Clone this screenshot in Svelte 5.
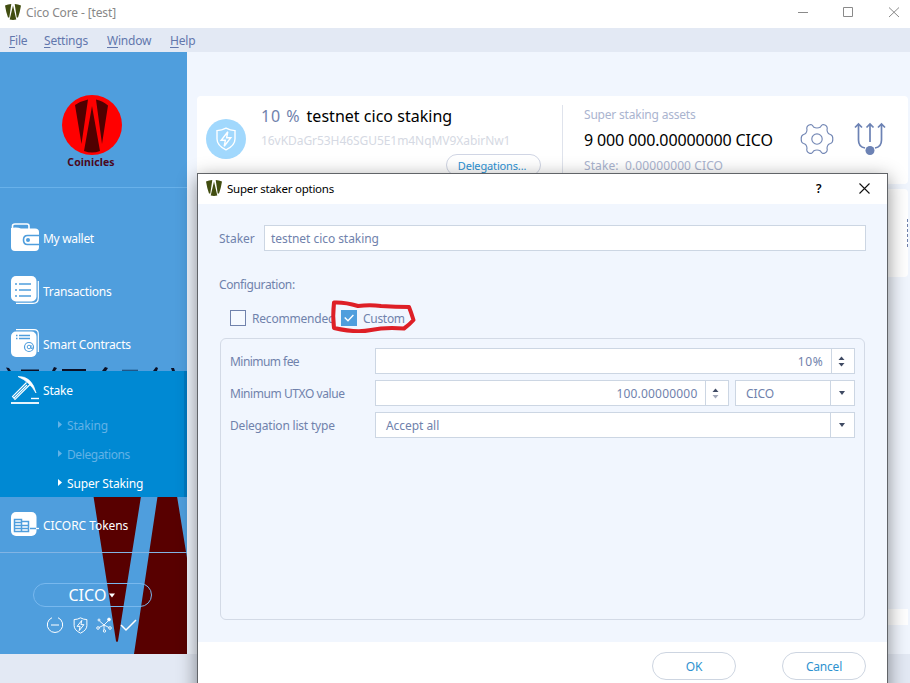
<script>
  const menus = [
    { key: 'F', rest: 'ile', w: 35 },
    { key: 'S', rest: 'ettings', w: 63 },
    { key: 'W', rest: 'indow', w: 63 },
    { key: 'H', rest: 'elp', w: 40 }
  ];
  const subs = [
    { label: 'Staking', active: false },
    { label: 'Delegations', active: false },
    { label: 'Super Staking', active: true }
  ];
</script>

{#snippet mark()}
  <svg class="mark" width="16" height="16" viewBox="0 0 16 16">
    <path d="M0 1.500Q3 0 6.300 0L4.300 13.500H3Q1 8 0 1.500ZM9.700 0Q13 0 16 1.500Q15 8 13 13.500H11.700ZM8 1.500L11.300 15.500Q8 16.300 4.700 15.500Z" fill="#414d10" />
  </svg>
{/snippet}

{#snippet shield(size)}
  <svg width={size} height={size} viewBox="0 0 20 20" fill="none" stroke="#fff" stroke-width="1.150">
    <path d="M10 1Q13.500 3 17.500 3V10Q17.500 15.500 10 19Q2.500 15.500 2.500 10V3Q6.500 3 10 1Z" />
    <path d="M11.500 4L6 11H9.500L8.500 16L14 9H10.500Z" />
  </svg>
{/snippet}

{#snippet updown(dim)}
  <svg width="7" height="11" viewBox="0 0 7 11">
    <path d="M3.500 .5L6.500 4H.5Z" fill="#3f4a63" />
    <path d="M3.500 10.500L6.500 7H.5Z" fill={dim ? '#a3a9ba' : '#3f4a63'} />
  </svg>
{/snippet}

{#snippet down()}
  <svg width="6" height="4" viewBox="0 0 6 4"><path d="M0 0H6L3 4Z" fill="#3f4a63" /></svg>
{/snippet}

<div class="window">
  <header class="titlebar">
    {@render mark()}
    <span class="wtitle">Cico Core - [test]</span>
    <svg class="winbtns" width="110" height="28" viewBox="800 0 110 28" fill="none" stroke="#8a8a8a">
      <path d="M798 12.500H808M843.500 7.500H852.500V16.500H843.500ZM889 7.500L899 17M899 7.500L889 17" />
    </svg>
  </header>
  <nav class="menubar">
    {#each menus as m}
      <span style="width: {m.w}px"><u>{m.key}</u>{m.rest}</span>
    {/each}
  </nav>

  <div class="body">
    <aside>
      <svg class="art" width="187" height="602" viewBox="0 52 187 602">
        <path d="M92.500 490H142L118 641Q117 643 116 641ZM158.500 490H176L187 558V654H134Z" fill="#580000" />
        <path d="M6 367.500L9 368L11 371H8ZM21 369.500H39V371H21ZM54 367L57 368L55 371H52ZM62 369H86V371H62ZM105 367L108 368L106 371H102ZM156 367L158 368L157 371H153ZM171 368H174L175 371H172Z" fill="#0b1026" />
        <path d="M122 370.300H138" stroke="#1b4f7e" stroke-width="1.200" />
      </svg>
      <div class="brand">
        <svg width="60" height="60" viewBox="0 0 60 60">
          <circle cx="30" cy="30" r="30" fill="#f00" />
          <path d="M13 10Q19 6 26 4.500L19.500 49ZM34 4.500Q41 6 46 10.500L40 49ZM30 11L38 56Q30 59 22 56Z" fill="#500000" />
        </svg>
        <b>Coinicles</b>
      </div>
      <div class="nav">
        <div class="item">
          <svg width="28" height="28" viewBox="0 0 28 28">
            <path d="M1.500 7V3Q1.500 1 4 1H16Q18 1 18 3V6" fill="none" stroke="#fff" stroke-width="1.600" />
            <path d="M0 5Q6 4 10 5.500H24Q28 5.500 28 9V24Q28 28 24 28H4Q0 28 0 24Z" fill="#fff" />
            <path d="M28 12.500H16.500Q12.500 12.500 12.500 17T16.500 21.500H28" fill="#fff" stroke="#4f9edd" stroke-width="1.600" />
            <circle cx="17" cy="17" r="2" fill="#4f9edd" />
          </svg>
          <span>My wallet</span>
        </div>
        <div class="item">
          <svg width="28" height="28" viewBox="0 0 28 28">
            <path d="M27.300 5V22Q27.300 27.300 22 27.300H5" fill="none" stroke="#fff" stroke-width="1.200" />
            <rect width="25.500" height="25.500" rx="5" fill="#fff" />
            <path d="M8 8H20M8 14H20M8 20H20M4 8H6M4 14H6M4 20H6" stroke="#4f9edd" stroke-width="1.400" />
          </svg>
          <span>Transactions</span>
        </div>
        <div class="item">
          <svg width="28" height="28" viewBox="0 0 28 28">
            <path d="M5 .7H23Q27.300 .7 27.300 5V23" fill="none" stroke="#fff" stroke-width="1.200" />
            <rect y="2.500" width="25.500" height="25.500" rx="5" fill="#fff" />
            <path d="M8 6.500H19M8 9.500H19M5 6.500H6.500M5 9.500H6.500" stroke="#4f9edd" stroke-width="1.300" />
            <g fill="none" stroke="#4f9edd"><circle cx="18" cy="18" r="4.500" stroke-width="1.200" /><circle cx="18" cy="18" r="1.800" /><path d="M20 16V19.500L22 19" /></g>
          </svg>
          <span>Smart Contracts</span>
        </div>
      </div>
      <div class="stake">
        <div class="item">
          <svg width="28" height="28" viewBox="0 0 28 28" fill="none" stroke="#fff">
            <path d="M7 .5Q21 0 25 17Q19 6 7 .5Z" fill="#fff" stroke-width=".7" />
            <path d="M15.500 6.500L1.500 20.500L4 23.500L19 8.500M3 22L16 9" stroke-width="1.100" />
            <path d="M20 22.500H28" stroke-width="1.400" />
            <path d="M0 27H28" stroke-width="1.800" />
          </svg>
          <span>Stake</span>
        </div>
        {#each subs as s}
          <div class="sub" class:active={s.active}>
            <svg width="4" height="7" viewBox="0 0 4 7"><path d="M0 0L4 3.500L0 7Z" fill="currentColor" /></svg>
            <span>{s.label}</span>
          </div>
        {/each}
      </div>
      <div class="item tokens">
        <svg width="28" height="24" viewBox="0 0 28 24">
          <rect width="25.500" height="24" rx="5" fill="#fff" />
          <path d="M3.500 19.500V7.500H10.500V19.500ZM10.500 9.500H17.500V19.500H10.500M3.500 10.500H10.500M3.500 13.500H17.500M3.500 16.500H17.500M19 16.500H25.500" fill="none" stroke="#4f9edd" stroke-width="1.500" />
          <path d="M25 16.500H28" stroke="#fff" stroke-width="1.300" />
        </svg>
        <span>CICORC Tokens</span>
      </div>
      <div class="unit">CICO<svg width="6" height="5" viewBox="0 0 6 5"><path d="M0 .5H6L3 4.500Z" fill="#fff" /></svg></div>
      <div class="status">
        <svg width="18" height="18" viewBox="0 0 18 18" fill="none" stroke="#fff"><path d="M6 1.700A7.700 7.700 0 1 0 12 1.700M5 9H13" /></svg>
        {@render shield(17)}
        <svg width="16" height="16" viewBox="0 0 16 16" fill="none" stroke="#fff" stroke-width=".9">
          <path d="M8 8L12.500 3.500M8 8L3.500 4M8 8L3 10.500M8 8L13 10.500M8 8V13" />
          <circle cx="13" cy="2.500" r="1.400" fill="#fff" /><circle cx="3" cy="3" r="1" /><circle cx="2" cy="11" r="1.300" /><circle cx="14" cy="11" r="1.300" /><circle cx="8.500" cy="14" r="1.200" />
        </svg>
        <svg width="17" height="14" viewBox="0 0 17 14" fill="none" stroke="#fff" stroke-width="1.500"><path d="M1 7L6 12L16 2" /></svg>
      </div>
    </aside>

    <main>
      <section class="card">
        <div class="badge">{@render shield(24)}</div>
        <div class="who">
          <div class="name"><i>10 %</i> testnet cico staking</div>
          <div class="addr">16vKDaGr53H46SGU5E1m4NqMV9XabirNw1</div>
          <div class="dbtn">Delegations...</div>
        </div>
        <div class="assets">
          <div class="cap">Super staking assets</div>
          <div class="amount">9 000 000.00000000 CICO</div>
          <div class="cap low">Stake:&nbsp; 0.00000000 CICO</div>
        </div>
        <svg class="gear" width="34" height="34" viewBox="-17 -17 34 34" fill="none" stroke="#7488b5" stroke-width="1.150">
          <circle r="5.200" />
          <path d="M-3.500-12Q0-10 3.500-12Q5-15.500 8-14Q11-12.500 10-9Q10.500-5 13.500-4.500Q16-3.500 15.800 0Q16 3.500 13.500 4.500Q10.500 5 10 9Q11 12.500 8 14Q5 15.500 3.500 12Q0 10-3.500 12Q-5 15.500-8 14Q-11 12.500-10 9Q-10.500 5-13.500 4.500Q-16 3.500-15.800 0Q-16-3.500-13.500-4.500Q-10.500-5-10-9Q-11-12.500-8-14Q-5-15.500-3.500-12Z" />
        </svg>
        <svg class="fork" width="32" height="34" viewBox="0 0 32 34" fill="none" stroke="#6c82b4" stroke-width="1.700">
          <path d="M4.500 3V18Q4.500 25 11 26M27.500 3V18Q27.500 25 21 26M16 3V20M1 5.500L4.500 2L8 5.500M12.500 5.500L16 2L19.500 5.500M24 5.500L27.500 2L31 5.500" />
          <circle cx="16" cy="28.500" r="4.500" fill="#6c82b4" stroke="none" />
        </svg>
      </section>
      <section class="card second"><div class="more"></div></section>
      <div class="strip"></div>
    </main>
  </div>
  <footer></footer>

  <div class="dialog">
    <div class="dtitle">
      {@render mark()}
      <span>Super staker options</span>
      <b>?</b>
      <svg width="11" height="11" viewBox="0 0 11 11" stroke="#111" stroke-width="1.100"><path d="M.5 .5L10.500 10.500M10.500 .5L.5 10.500" /></svg>
    </div>
    <div class="dbody">
      <div class="row staker"><span class="slab">Staker</span><div class="field grow"><span>testnet cico staking</span></div></div>
      <div class="conf">Configuration:</div>
      <div class="row checks">
        <span class="box"></span><span class="rec">Recommended</span>
        <span class="box on"><svg width="10" height="8" viewBox="0 0 10 8" fill="none" stroke="#fff" stroke-width="1.400"><path d="M.7 3.500L4 6.800L9.400 1" /></svg></span>
        <span class="cus">Custom</span>
      </div>
      <div class="panel">
        <div class="row"><span class="lab fee">Minimum fee</span><div class="field grow num"><span>10%</span><em>{@render updown(false)}</em></div></div>
        <div class="row"><span class="lab utxo">Minimum UTXO value</span>
          <div class="field grow num"><span>100.00000000</span><em>{@render updown(true)}</em></div>
          <div class="field combo cico"><span>CICO</span><em>{@render down()}</em></div>
        </div>
        <div class="row"><span class="lab">Delegation list type</span><div class="field grow combo"><span>Accept all</span><em>{@render down()}</em></div></div>
      </div>
    </div>
    <div class="dfoot"><div class="btn">OK</div><div class="btn">Cancel</div></div>
    <svg class="pen" width="90" height="38" viewBox="328 298 90 38" fill="none" stroke="#de1f26" stroke-width="4" stroke-linejoin="round" stroke-linecap="round">
      <path d="M334 302.500Q345 302 358 306Q370 304.500 381 306Q396 307 409 307Q411 312 413.500 320Q409 325 404 328.500Q385 327 371 330Q356 333 334 328Q332.500 316 334 302.500Z" />
    </svg>
  </div>
</div>

<style>
  :global(body) { margin: 0; }
  .window { position: relative; width: 910px; height: 683px; overflow: hidden; display: flex; flex-direction: column; background: #f1f6fe; font: 12px/16px "Noto Sans", sans-serif; color: #7082ac; white-space: nowrap; }
  svg { display: block; flex: none; }
  .titlebar { height: 28px; background: #fff; display: flex; align-items: flex-start; padding: 4px 0 0 5px; box-sizing: border-box; color: #888; }
  .wtitle { margin: 1px auto 0 5px; font-size: 12px; letter-spacing: -.13px; }
  .winbtns { margin-top: -4px; overflow: visible; }
  .menubar { height: 24px; background: #e3e9f4; display: flex; align-items: center; padding: 2px 0 0 9px; box-sizing: border-box; color: #6277ad; letter-spacing: -.2px; }
  .menubar u { text-underline-offset: 2px; }
  .body { height: 602px; display: flex; }
  aside { position: relative; width: 187px; background: #4f9edd; color: #fff; }
  .art { position: absolute; left: 0; top: 0; }
  .brand, .nav, .stake, .tokens, .unit, .status { position: relative; }
  .brand { height: 136px; box-sizing: border-box; border-bottom: 1px solid #68b1ea; padding: 43px 0 0 62px; }
  .brand b { display: block; width: 58px; margin-top: -1px; text-align: center; font-size: 10.5px; letter-spacing: .1px; color: #4a0820; }
  .nav { padding-top: 22px; height: 183px; box-sizing: border-box; }
  .item { display: flex; align-items: center; gap: 4px; height: 53px; padding-left: 11px; letter-spacing: -.2px; }
  .item span { padding-top: 3px; }
  .nav .item span { padding-top: 4px; }
  .nav .item:first-child span { letter-spacing: -.3px; }
  .stake { background: #0089d3; height: 126px; box-shadow: inset -3px 0 0 #0079c0; }
  .stake .item { height: 39px; }
  .stake .item span { padding-top: 1px; }
  .stake .item svg { margin-top: -2px; }
  .sub { display: flex; align-items: center; gap: 5px; height: 29px; padding-left: 58px; color: #62b2e6; letter-spacing: -.15px; }
  .sub span { padding-top: 2px; }
  .sub svg { margin-top: -1px; }
  .sub:nth-child(3) { letter-spacing: -.4px; }
  .sub.active { color: #fff; }
  .tokens { height: 56px; box-sizing: border-box; border-bottom: 1px solid #82b4e4; letter-spacing: -.05px; }
  .tokens svg { margin-top: -1px; }
  .unit { margin: 30px 0 0 33px; width: 119px; height: 24px; box-sizing: border-box; border: 1px solid #78b8ee; border-radius: 12px; display: flex; align-items: center; justify-content: center; gap: 2px; padding-right: 2px; font-size: 16px; letter-spacing: .1px; }
  .status { display: flex; align-items: center; gap: 7.5px; padding: 9px 0 0 46px; }
  main { flex: 1; padding: 44px 2px 0 10px; display: flex; flex-direction: column; }
  .card { height: 88px; background: #fff; border-radius: 4px; display: flex; flex: none; }
  .badge { width: 40px; height: 40px; margin: 23px 15px 0 9px; border-radius: 50%; background: #a1d8fd; display: flex; align-items: center; justify-content: center; }
  .who { width: 301px; display: flex; flex-direction: column; }
  .name { margin-top: 10px; font-size: 16px; line-height: 20px; color: #000; letter-spacing: .02px; }
  .name i { font-style: normal; color: #7082ac; letter-spacing: .9px; margin-right: 2px; }
  .addr { margin-top: 7px; color: #d5d9e3; letter-spacing: -.06px; }
  .dbtn { align-self: flex-start; margin: 5px 0 0 185px; width: 95px; height: 22px; box-sizing: border-box; border: 1px solid #d0d5e4; border-radius: 11px; text-align: center; line-height: 21px; font-size: 11px; letter-spacing: -.15px; padding-right: 3px; color: #2d92d4; }
  .assets { margin-top: 9px; width: 216px; border-left: 1px solid #dfe3ec; padding-left: 21px; }
  .cap { margin-top: 2px; color: #aab4cf; letter-spacing: -.2px; }
  .low { letter-spacing: .1px; }
  .amount { margin: 7px 0 8px; font-size: 16px; line-height: 20px; color: #000; letter-spacing: -.13px; }
  .gear { margin-top: 26px; }
  .fork { margin: 26px 0 0 20px; }
  .second { margin-top: 5px; justify-content: flex-end; }
  .more { margin-top: 30px; height: 28px; border-right: 1px dashed #7082ac; }
  .strip { margin-top: 332px; height: 16px; background: #fff; }
  footer { height: 29px; background: #e3e9f4; }
  .dialog { position: absolute; left: 197px; top: 173px; width: 691px; height: 530px; box-sizing: border-box; border: 1px solid #616468; background: #fff; box-shadow: 0 5px 18px rgba(0, 0, 0, .45); }
  .dtitle { height: 30px; display: flex; align-items: center; padding-left: 8px; color: #000; }
  .dtitle .mark { margin-top: -3px; }
  .dtitle svg:last-child { margin-top: -2px; }
  .dtitle span { margin-left: 5px; width: 589px; font-size: 11.5px; letter-spacing: -.25px; }
  .dtitle b { width: 43px; font-weight: 600; }
  .dbody { height: 438px; box-sizing: border-box; background: #f1f6fe; padding: 21px 21px 0 21px; }
  .row { display: flex; align-items: center; }
  .slab { width: 45px; padding-top: 2px; }
  .field { height: 26px; box-sizing: border-box; border: 1px solid #ccd6e3; background: #fff; display: flex; align-items: center; padding-left: 6px; }
  .field span { padding-top: 2px; letter-spacing: -.05px; }
  .grow { flex: 1; }
  .conf { margin-top: 26px; letter-spacing: -.38px; }
  .checks { height: 16px; margin: 17px 0 12px 11px; }
  .box { width: 16px; height: 16px; box-sizing: border-box; border: 1px solid #7082ac; background: #f5f9ff; display: flex; align-items: center; justify-content: center; }
  .box.on { background: #4f9edd; border-color: #4f9edd; }
  .rec { width: 83px; margin-left: 6px; margin-right: 6px; padding-top: 2px; letter-spacing: -.2px; }
  .cus { margin-left: 6px; padding-top: 2px; letter-spacing: -.3px; }
  .panel { width: 645px; height: 282px; margin-left: 1px; box-sizing: border-box; border: 1px solid #d3dae6; border-radius: 6px; padding: 9px; display: flex; flex-direction: column; gap: 6px; }
  .lab { width: 145px; padding-top: 2px; letter-spacing: -.2px; }
  .fee { letter-spacing: -.55px; }
  .utxo { letter-spacing: -.43px; }
  .num, .combo { padding: 0; }
  .num span { flex: 1; text-align: right; margin-right: 7.5px; letter-spacing: .2px; }
  .fee + .num span { letter-spacing: .7px; }
  .combo span { flex: 1; margin-left: 10px; }
  em { width: 24px; height: 24px; box-sizing: border-box; border-left: 1px solid #ccd6e3; display: flex; align-items: center; justify-content: center; padding-right: 2px; }
  .num em { width: 23px; padding-right: 4px; }
  .cico { width: 120px; margin-left: 6px; }
  .dfoot { display: flex; gap: 46px; padding: 10px 0 0 454px; }
  .btn { width: 84px; height: 28px; box-sizing: border-box; border: 1px solid #cdd5e1; border-radius: 14px; text-align: center; line-height: 27px; letter-spacing: -.2px; color: #2e92d0; }
  .pen { position: absolute; left: 130px; top: 124px; }
</style>
